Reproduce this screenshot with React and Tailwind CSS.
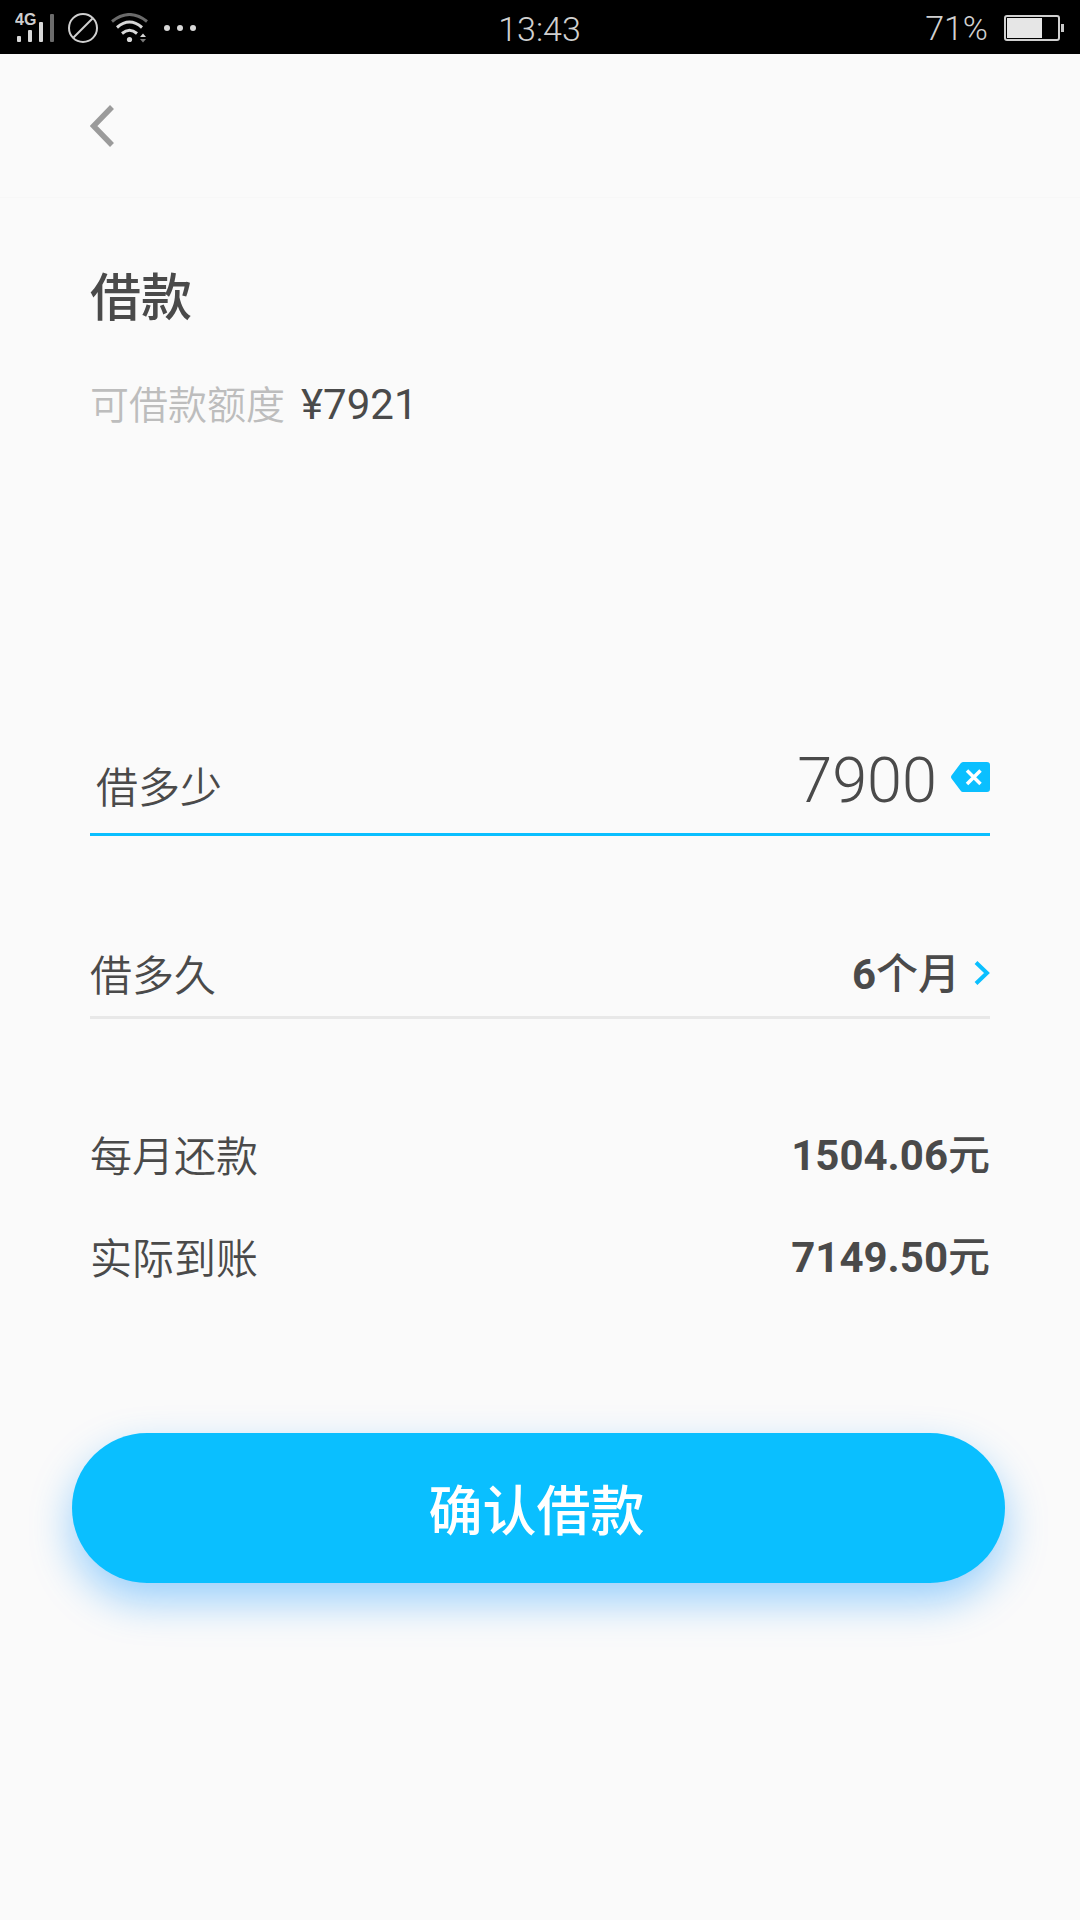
import React, { useState } from 'react';

const SignalIcon = () => (
    <svg width="40" height="42" viewBox="15 6 40 42" aria-hidden="true">
        <text x="15" y="24" fontSize="16" fontWeight="700" fontFamily="Liberation Sans, sans-serif" fill="#cfcfcf">4G</text>
        <rect x="17" y="35" width="4" height="6" rx="1" fill="#d8d8d8" />
        <rect x="28" y="29" width="4" height="12" rx="1" fill="#d8d8d8" />
        <rect x="39" y="21" width="4" height="20" rx="1" fill="#d8d8d8" />
        <rect x="50" y="13" width="4" height="28" rx="1" fill="#6b6b6b" />
    </svg>
);

const MuteIcon = () => (
    <svg width="30" height="30" viewBox="0 0 30 30" fill="none" stroke="#d0d0d0" strokeWidth="2" aria-hidden="true">
        <circle cx="15" cy="15" r="14" />
        <path d="M5.5 24.5 24.5 5.5" />
    </svg>
);

const WifiIcon = () => (
    <svg width="38" height="30" viewBox="111 12 38 30" fill="none" aria-hidden="true">
        <path d="M112 20.5Q129.5 6.5 147 20.5" stroke="#6b6b6b" strokeWidth="3" />
        <path d="M117 26.5Q129.5 15.5 142 26.5" stroke="#d8d8d8" strokeWidth="3" />
        <path d="M122 32.5Q129.5 26 137 32.5" stroke="#d8d8d8" strokeWidth="3" />
        <circle cx="129.5" cy="38.5" r="2.6" fill="#d8d8d8" />
        <path d="M140 36 143 32.5 146 36Z" fill="#d8d8d8" />
        <path d="M140 38 143 41.5 146 38Z" fill="#7a7a7a" />
    </svg>
);

const DotsIcon = () => (
    <svg width="32" height="8" viewBox="0 0 32 8" fill="#d8d8d8" aria-hidden="true">
        <circle cx="3" cy="4" r="3" />
        <circle cx="16" cy="4" r="3" />
        <circle cx="29" cy="4" r="3" />
    </svg>
);

const BatteryIcon = () => (
    <svg width="60" height="26" viewBox="0 0 60 26" aria-hidden="true">
        <rect x="1" y="1" width="54" height="24" rx="2" fill="none" stroke="#d0d0d0" strokeWidth="2" />
        <rect x="3" y="3" width="35" height="20" fill="#e6e6e6" />
        <rect x="57" y="9" width="3" height="8" fill="#c8c8c8" />
    </svg>
);

const StatusBar = () => (
    <div className="grid grid-cols-3 items-center h-[54px] bg-black pl-[15px] pr-4 font-[Roboto] text-[34px] leading-[54px] font-light text-[#d0d0d0]">
        <div className="flex items-center gap-[13px]">
            <SignalIcon />
            <MuteIcon />
            <WifiIcon />
            <span className="pl-0.5"><DotsIcon /></span>
        </div>
        <div className="pt-0.5 text-center">13:43</div>
        <div className="flex items-center justify-end gap-4">
            <span>71%</span>
            <BatteryIcon />
        </div>
    </div>
);

const SummaryRow = ({ label, value }) => (
    <div className="flex items-center justify-between h-[60px] text-[42px] leading-[60px]">
        <dt className="font-[350]">{label}</dt>
        <dd className="font-[Roboto] font-bold">
            {value}
            <span className="font-['Noto_Sans_CJK_SC'] font-medium">元</span>
        </dd>
    </div>
);

const App = () => {
    const [amount, setAmount] = useState('7900');

    return (
        <div className="min-h-screen bg-[#fafafa] text-[#4a4a4a] font-['Noto_Sans_CJK_SC',sans-serif]">
            <StatusBar />

            <header className="flex items-center h-36 px-[90px] border-b border-[#f7f7f7]">
                <button type="button" aria-label="返回" className="cursor-pointer">
                    <svg width="24" height="42" viewBox="0 0 24 42" fill="none" stroke="#9b9b9b" strokeWidth="5.5">
                        <path d="M22 2 3.5 21 22 40" />
                    </svg>
                </button>
            </header>

            <main className="px-[90px] pt-[60px]">
                <h1 className="text-[51px] leading-[72px] font-medium">借款</h1>
                <p className="mt-[42px] flex items-baseline h-[60px] gap-4 leading-[60px]">
                    <span className="text-[39px] font-[350] text-[#bdbdbd]">可借款额度</span>
                    <span className="font-[Roboto] text-[42px]">¥7921</span>
                </p>

                <div className="mt-[304px] flex items-center h-[100px] border-b-3 border-[#0abfff]">
                    <label htmlFor="amount" className="pl-[6px] shrink-0 text-[42px] leading-[60px] font-[350]">借多少</label>
                    <div className="flex-1 min-w-0 flex items-center gap-3.5 pb-2">
                        <input
                            id="amount"
                            inputMode="numeric"
                            value={amount}
                            onChange={(e) => setAmount(e.target.value)}
                            className="flex-1 min-w-0 bg-transparent text-right font-[Roboto] text-[63px] leading-[84px] font-light outline-none"
                        />
                        <button type="button" aria-label="清除" onClick={() => setAmount('')} className="pb-2 cursor-pointer">
                            <svg className="block" width="39" height="30" viewBox="0 0 39 30">
                                <path d="M12 0H36Q39 0 39 3V27Q39 30 36 30H12Q10.5 30 9.5 28.5L0.5 16.5Q-0.5 15 0.5 13.5L9.5 1.5Q10.5 0 12 0Z" fill="#0abfff" />
                                <path d="M16 8.5 29.5 22M29.5 8.5 16 22" stroke="#fff" strokeWidth="3.5" />
                            </svg>
                        </button>
                    </div>
                </div>

                <div className="mt-[100px] flex items-center justify-between h-[83px] pb-1.5 border-b-3 border-[#e8e8e8] text-[42px] leading-[60px]">
                    <span id="term" className="font-[350]">借多久</span>
                    <button type="button" aria-describedby="term" className="flex items-center gap-3.5 cursor-pointer">
                        <span className="font-[Roboto] font-bold">
                            6<span className="font-['Noto_Sans_CJK_SC'] font-medium">个月</span>
                        </span>
                        <svg width="16" height="24" viewBox="0 0 16 24" fill="none" stroke="#0abfff" strokeWidth="4">
                            <path d="M2 1.5 13 12 2 22.5" />
                        </svg>
                    </button>
                </div>

                <dl className="mt-[105px] flex flex-col gap-[42px]">
                    <SummaryRow label="每月还款" value="1504.06" />
                    <SummaryRow label="实际到账" value="7149.50" />
                </dl>
            </main>

            <div className="pl-[72px] pr-[75px] pt-[147px] pb-20">
                <button
                    type="button"
                    className="w-full h-[150px] pr-1 rounded-full bg-[#0abfff] text-[54px] leading-[78px] font-medium text-white shadow-[0_18px_42px_rgba(10,145,255,0.4)] cursor-pointer"
                >
                    确认借款
                </button>
            </div>
        </div>
    );
};

export default App;
